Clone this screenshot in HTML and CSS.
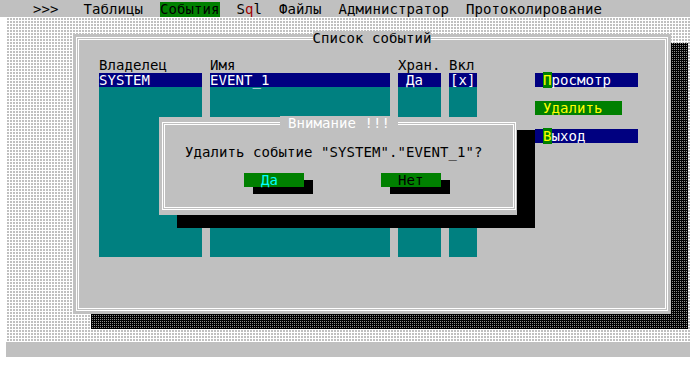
FILE: index.html
```html
<!DOCTYPE html>
<html>
    <head>
        <meta charset="UTF-8">
        <title>Список событий</title>
        <link rel="stylesheet" href="styles.css">
    </head>
    <body>
        <div class="screen">
            <!-- верхнее меню -->
            <div class="menubar">
                <span class="mi mi-first">&gt;&gt;&gt;</span>
                <span class="mi">Таблицы</span>
                <span class="mi mi-active">События</span>
                <span class="mi">S<span class="hot">q</span>l</span>
                <span class="mi">Файлы</span>
                <span class="mi">Администратор</span>
                <span class="mi">Протоколирование</span>
            </div>

            <div class="desktop">
                <!-- окно списка -->
                <div class="window">
                    <div class="frame">
                        <div class="wtitle">Список событий</div>
                        <div class="wbody">
                            <div class="col col-owner">
                                <div class="head">Владелец</div>
                                <div class="list"><div class="row">SYSTEM</div></div>
                            </div>
                            <div class="col col-name">
                                <div class="head">Имя</div>
                                <div class="list"><div class="row">EVENT_1</div></div>
                            </div>
                            <div class="col col-keep">
                                <div class="head">Хран.</div>
                                <div class="list"><div class="row row-keep">Да</div></div>
                            </div>
                            <div class="col col-on">
                                <div class="head">Вкл</div>
                                <div class="list"><div class="row row-on">[x]</div></div>
                            </div>
                            <div class="actions">
                                <div class="btn btn-view"><span class="key">П</span>росмотр</div>
                                <div class="btn btn-del">Удалить</div>
                                <div class="btn btn-exit"><span class="key">В</span>ыход</div>
                            </div>
                        </div>
                    </div>
                </div>

                <!-- диалог подтверждения -->
                <div class="dialog">
                    <div class="dframe">
                        <div class="dtitle"> Внимание !!! </div>
                        <div class="msg">Удалить событие "SYSTEM"."EVENT_1"?</div>
                        <div class="dbuttons">
                            <div class="dbtn dbtn-yes">Да</div>
                            <div class="dbtn dbtn-no">Нет</div>
                        </div>
                    </div>
                </div>
            </div>

            <div class="statusbar"></div>
        </div>
    </body>
</html>
```

FILE: styles.css
```css
body{
    margin: 0;
    background-color: #fff;
    font-family: "DejaVu Sans Mono", "Liberation Mono", monospace;
    font-size: 14px;
    letter-spacing: 0.07px;
    color: #000;
}
.screen{
    width: 690px;
}
.menubar{
    height: 17px;
    box-sizing: border-box;
    padding: 2px 0 0 33px;
    background-color: #c0c0c0;
    display: flex;
    gap: 17px;
    line-height: 14px;
    white-space: pre;
}
.mi-first{
    margin-right: 8px;
}
.mi-active{
    background-color: #008000;
}
.hot{
    color: #a00000;
}
.desktop{
    position: relative;
    z-index: 0;
    margin-left: 6px;
    width: 684px;
    height: 325px;
    background:
        repeating-linear-gradient(0deg, #fff 0 1px, transparent 1px 3px),
        repeating-linear-gradient(90deg, #fff 0 1px, transparent 1px 3px),
        #c0c0c0;
}
.statusbar{
    margin-left: 6px;
    width: 684px;
    height: 15px;
    background-color: #c0c0c0;
}

/* окно */
.window{
    position: absolute;
    left: 67px;
    top: 17px;
    width: 598px;
    height: 280px;
    box-sizing: border-box;
    padding: 3px;
    background-color: #c0c0c0;
}
.window::after{
    content: "";
    position: absolute;
    left: 18px;
    top: 9px;
    right: -17px;
    bottom: -15px;
    z-index: -1;
    background:
        repeating-linear-gradient(0deg, #000 0 1px, transparent 1px 2px),
        repeating-linear-gradient(90deg, #000 0 1px, transparent 1px 2px),
        #8c8c8c;
}
.frame{
    height: 100%;
    box-sizing: border-box;
    border: 3px double #fff;
    display: flex;
    flex-direction: column;
}
.wtitle{
    align-self: center;
    margin-top: -9px;
    line-height: 14px;
    background-color: #c0c0c0;
}
.wbody{
    display: flex;
    gap: 8px;
    margin-top: 13px;
    padding-left: 20px;
}
.col{
    display: flex;
    flex-direction: column;
}
.head{
    line-height: 15px;
    height: 15px;
}
.list{
    height: 184px;
    background-color: #008080;
}
.row{
    line-height: 14px;
    background-color: #000080;
    color: #fff;
    white-space: pre;
}
.col-owner{ width: 103px; }
.col-name{ width: 180px; }
.col-keep{ width: 43px; }
.col-on{ width: 28px; }
.row-keep{ padding-left: 8px; }
.row-on{ padding-left: 1px; }

.actions{
    margin-left: 50px;
    padding-top: 15px;
    display: flex;
    flex-direction: column;
    align-items: flex-start;
    gap: 14px;
}
.btn{
    line-height: 14px;
    box-sizing: border-box;
    padding-left: 8px;
    background-color: #000080;
    color: #fff;
}
.btn-view{ width: 103px; }
.btn-exit{ width: 103px; }
.btn-del{
    width: 87px;
    background-color: #008000;
    color: #ffff00;
}
.key{
    background-color: #008000;
    color: #ffff00;
}

/* диалог */
.dialog{
    position: absolute;
    left: 153px;
    top: 100px;
    width: 358px;
    height: 98px;
    box-sizing: border-box;
    padding: 5px 1px 5px 3px;
    background-color: #c0c0c0;
    box-shadow: 18px 13px 0 #000;
}
.dframe{
    height: 100%;
    box-sizing: border-box;
    border: 3px double #fff;
    display: flex;
    flex-direction: column;
}
.dtitle{
    align-self: center;
    margin-top: -9px;
    line-height: 14px;
    white-space: pre;
    color: #fff;
    background-color: #c0c0c0;
}
.msg{
    margin-top: 15px;
    padding-left: 20px;
    line-height: 14px;
}
.dbuttons{
    display: flex;
    gap: 77px;
    margin-top: 14px;
    padding-left: 79px;
}
.dbtn{
    width: 60px;
    box-sizing: border-box;
    padding-left: 17px;
    line-height: 14px;
    background-color: #008000;
    box-shadow: 9px 7px 0 #000;
}
.dbtn-yes{ color: #00ffff; }
.dbtn-no{ color: #000; }
```
